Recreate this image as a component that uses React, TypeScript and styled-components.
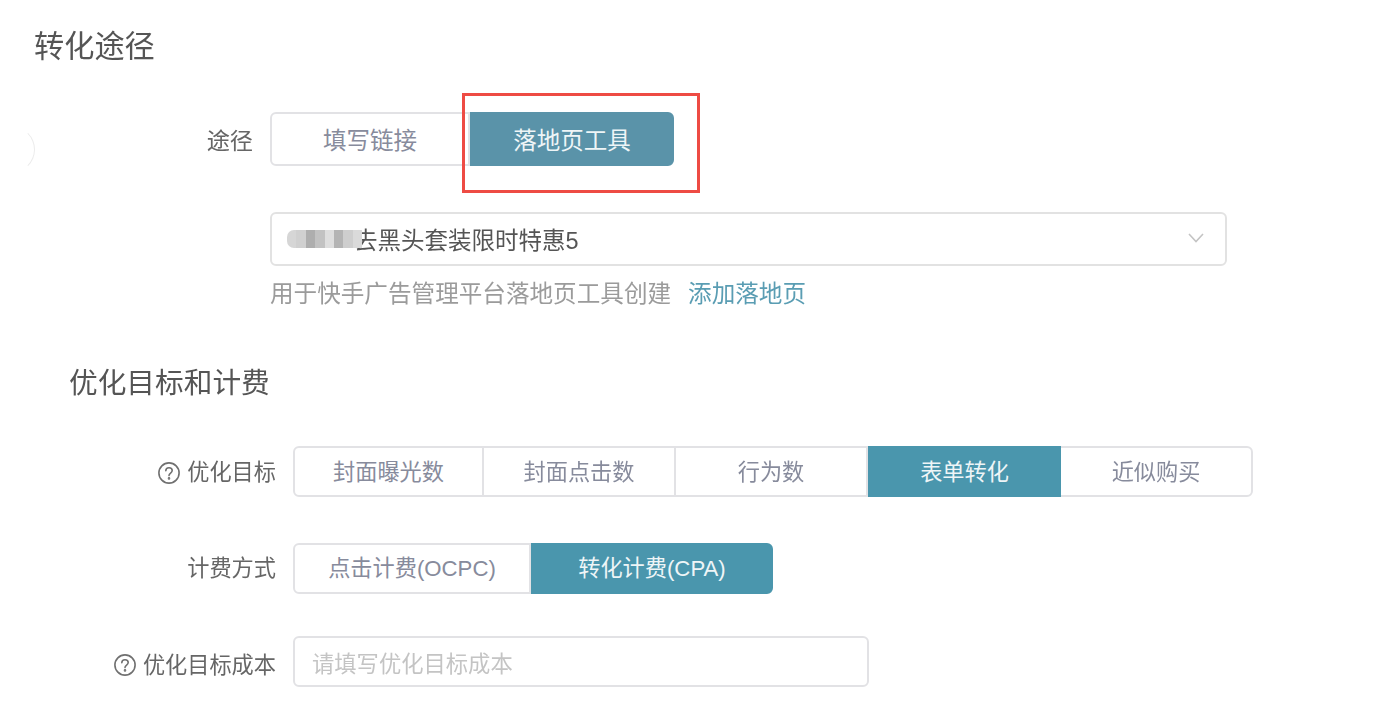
import React from "react";
import styled, { createGlobalStyle } from "styled-components";

const GlobalStyle = createGlobalStyle`
  html, body {
    margin: 0;
    height: 100%;
    background: #fff;
    overflow: hidden;
  }
  * {
    box-sizing: border-box;
  }
`;

const Page = styled.div`
  position: relative;
  width: 1380px;
  height: 728px;
  padding-top: 27px;
  font-family: "Liberation Sans", "Noto Sans CJK SC", sans-serif;
  color: #666;
  overflow: hidden;
  filter: blur(0.45px);
`;

const Title = styled.h2<{ $indent: number; $size: number; $gap: number }>`
  margin: 0 0 ${({ $gap }) => $gap}px ${({ $indent }) => $indent}px;
  height: 40px;
  line-height: 40px;
  font-weight: 400;
  font-size: ${({ $size }) => $size}px;
  color: #555;
`;

const Row = styled.div<{ $gap: number; $labelWidth: number }>`
  display: grid;
  grid-template-columns: ${({ $labelWidth }) => $labelWidth}px auto;
  justify-content: start;
  align-items: center;
  column-gap: 17px;
  margin-bottom: ${({ $gap }) => $gap}px;
`;

const Label = styled.label<{ $size: number }>`
  display: flex;
  justify-content: flex-end;
  align-items: center;
  gap: 7px;
  font-size: ${({ $size }) => $size}px;
  color: #666;
`;

const LabelText = styled.span<{ $lift?: number; $drop?: number }>`
  padding-bottom: ${({ $lift }) => $lift ?? 0}px;
  padding-top: ${({ $drop }) => $drop ?? 0}px;
`;

const Segments = styled.div<{ $height: number }>`
  display: flex;
  height: ${({ $height }) => $height}px;
`;

const Segment = styled.div<{ $active?: boolean; $width: number; $size: number; $tone?: string; $lift: number }>`
  display: flex;
  align-items: center;
  justify-content: center;
  width: ${({ $width }) => $width}px;
  margin-left: ${({ $active }) => ($active ? 0 : -2)}px;
  padding-bottom: ${({ $lift }) => $lift}px;
  font-size: ${({ $size }) => $size}px;
  color: ${({ $active }) => ($active ? "#eef5f7" : "#878b9c")};
  background: ${({ $active, $tone }) => ($active ? $tone : "#fff")};
  border: 2px solid ${({ $active, $tone }) => ($active ? $tone : "#e2e2e5")};
  position: relative;
  z-index: ${({ $active }) => ($active ? 1 : 0)};

  &:first-child {
    margin-left: 0;
    border-radius: 6px 0 0 6px;
  }
  &:last-child {
    border-radius: 0 6px 6px 0;
  }
`;

const Field = styled.div`
  display: flex;
  flex-direction: column;
  margin-left: 270px;
  margin-bottom: 54px;
`;

const Select = styled.div`
  position: relative;
  display: flex;
  align-items: center;
  justify-content: space-between;
  width: 957px;
  height: 54px;
  padding: 0 21px 0 20px;
  border: 2px solid #e2e2e2;
  border-radius: 6px;
  font-size: 23.5px;
  color: #555;
`;

const SelectText = styled.span`
  padding-left: 62px;
`;

/* mosaic that hides the start of the page name in the source picture */
const Mosaic = styled.div`
  position: absolute;
  left: 15px;
  top: 16px;
  display: flex;
  height: 18px;
  border-radius: 7px 0 0 7px;
  overflow: hidden;
`;

const MosaicCell = styled.span<{ $shade: string }>`
  width: 9.4px;
  background: ${({ $shade }) => $shade};
`;

const Help = styled.div`
  display: flex;
  gap: 17px;
  margin-top: 13px;
  height: 30px;
  line-height: 30px;
  font-size: 23.6px;
  color: #9b9b9b;
`;

const TextLink = styled.a`
  color: #5a9db3;
`;

const Input = styled.div`
  display: flex;
  align-items: center;
  width: 576px;
  height: 51px;
  padding-left: 17px;
  border: 2px solid #e2e2e5;
  border-radius: 6px;
  font-size: 22.3px;
  color: #c4c4c4;
`;

/* the red mark someone drew on the screenshot */
const Highlight = styled.div`
  position: absolute;
  left: 462px;
  top: 93px;
  width: 238px;
  height: 100px;
  border: 3px solid #ee4b44;
  z-index: 2;
`;

/* edge of a round button that is cut off by the left side */
const EdgeArc = styled.div`
  position: absolute;
  left: -12px;
  top: 126px;
  width: 47px;
  height: 47px;
  border: 1px solid transparent;
  border-right-color: #ececec;
  border-radius: 50%;
`;

const HelpIcon = styled.svg<{ $drop: number }>`
  flex: none;
  margin-top: ${({ $drop }) => $drop}px;
`;

const ChevronIcon = styled.svg`
  margin-bottom: 2px;
`;

const QuestionIcon = ({ drop }: { drop: number }) => (
  <HelpIcon $drop={drop} width="22" height="22" viewBox="0 0 22 22" fill="none" stroke="#707070" strokeWidth="1.6">
    <circle cx="11" cy="11" r="10.1" />
    <path d="M7.8 8.8c0-2 1.4-3.1 3.2-3.1s3.2 1.1 3.2 2.9c0 2.5-3.2 2.5-3.2 5" strokeLinecap="round" />
    <circle cx="11" cy="16.4" r="0.5" fill="#707070" />
  </HelpIcon>
);

const Chevron = () => (
  <ChevronIcon width="16" height="10" viewBox="0 0 16 10" fill="none" stroke="#c4c4c4" strokeWidth="1.6">
    <path d="M1 1l7 7.5L15 1" />
  </ChevronIcon>
);

const mosaicShades = ["#d6d6d6", "#d0d0d0", "#aeaeae", "#c2c2c2", "#dedede", "#b4b4b4", "#cecece", "#dadada"];

const goals = [
  { text: "封面曝光数", width: 191 },
  { text: "封面点击数", width: 194 },
  { text: "行为数", width: 194 },
  { text: "表单转化", width: 193, active: true },
  { text: "近似购买", width: 194 },
];

export default function App() {
  return (
    <Page>
      <GlobalStyle />
      <EdgeArc />
      <Highlight />

      <Title $indent={34} $size={30.2} $gap={45}>转化途径</Title>
      <Row $gap={46} $labelWidth={253}>
        <Label $size={23.2}><LabelText $lift={1}>途径</LabelText></Label>
        <Segments $height={54}>
          <Segment $width={200} $size={23.5} $lift={1}>填写链接</Segment>
          <Segment $width={204} $size={23.5} $lift={1} $active $tone="#5a93a9">落地页工具</Segment>
        </Segments>
      </Row>
      <Field>
        <Select>
          <SelectText>去黑头套装限时特惠5</SelectText>
          <Chevron />
          <Mosaic>
            {mosaicShades.map((shade, index) => (
              <MosaicCell key={index} $shade={shade} />
            ))}
          </Mosaic>
        </Select>
        <Help>
          <span>用于快手广告管理平台落地页工具创建</span>
          <TextLink>添加落地页</TextLink>
        </Help>
      </Field>

      <Title $indent={69} $size={28.7} $gap={43}>优化目标和计费</Title>
      <Row $gap={46} $labelWidth={276}>
        <Label $size={22.2}><QuestionIcon drop={3} /><LabelText $lift={4}>优化目标</LabelText></Label>
        <Segments $height={51}>
          {goals.map((goal) => (
            <Segment key={goal.text} $width={goal.width} $size={22.2} $lift={4} $active={goal.active} $tone="#4a96ad">
              {goal.text}
            </Segment>
          ))}
        </Segments>
      </Row>
      <Row $gap={42} $labelWidth={276}>
        <Label $size={22.2}><LabelText $lift={6}>计费方式</LabelText></Label>
        <Segments $height={51}>
          <Segment $width={238} $size={22.2} $lift={6}>点击计费(OCPC)</Segment>
          <Segment $width={242} $size={22.2} $lift={6} $active $tone="#4a96ad">转化计费(CPA)</Segment>
        </Segments>
      </Row>
      <Row $gap={0} $labelWidth={276}>
        <Label $size={22.2}><QuestionIcon drop={6} /><LabelText $drop={2}>优化目标成本</LabelText></Label>
        <Input>请填写优化目标成本</Input>
      </Row>
    </Page>
  );
}
